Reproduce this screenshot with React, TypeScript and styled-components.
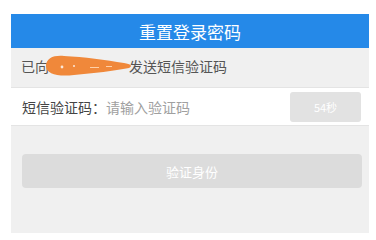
import React from "react";
import styled, { createGlobalStyle } from "styled-components";

const Global = createGlobalStyle`
  html, body { margin: 0; padding: 0; background: #ffffff; }
  body { font-family: "Noto Sans CJK SC", "Noto Sans", sans-serif; }
`;

const Frame = styled.div`
  margin: 14px 0 0 11px;
  width: 358px;
  height: 219px;
  background: #f0f0f0;
  display: flex;
  flex-direction: column;
`;

const Header = styled.div`
  height: 34px;
  background: #2589e8;
  color: #ffffff;
  font-size: 17px;
  display: flex;
  align-items: center;
  justify-content: center;
`;

const Info = styled.div`
  position: relative;
  height: 35px;
  padding: 0 0 4px 10px;
  display: flex;
  align-items: center;
  font-size: 14px;
  color: #555555;
  border-bottom: 1px solid #e4e4e4;
`;

const Masked = styled.span`
  display: inline-block;
  width: 80px;
`;

const Scribble = styled.svg`
  position: absolute;
  left: 33px;
  top: 5px;
`;

const InputRow = styled.div`
  height: 37px;
  background: #ffffff;
  border-bottom: 1px solid #e4e4e4;
  display: flex;
  align-items: center;
  padding: 0 8px 0 11px;
  font-size: 14px;
`;

const Label = styled.span`
  color: #444444;
`;

const Placeholder = styled.span`
  color: #a0a0a0;
  flex: 1;
`;

const CodeButton = styled.div`
  width: 71px;
  height: 30px;
  border-radius: 3px;
  background: #e2e2e2;
  color: #ffffff;
  font-size: 11px;
  display: flex;
  align-items: center;
  justify-content: center;
`;

const Body = styled.div`
  padding: 28px 7px 0 11px;
`;

const Submit = styled.div`
  height: 34px;
  border-radius: 4px;
  background: #dcdcdc;
  color: #ffffff;
  font-size: 13px;
  display: flex;
  align-items: center;
  justify-content: center;
`;

export default function App() {
  return (
    <>
      <Global />
      <Frame>
        <Header>重置登录密码</Header>
        <Info>
          <span>已向</span>
          <Masked />
          <span>发送短信验证码</span>
          <Scribble width="90" height="28" viewBox="0 0 90 28">
            <path
              d="M2 13 C2 5, 10 2, 20 3 C40 4, 62 7, 80 10 C87 11, 89 13, 85 15 C70 18, 50 20, 30 22 C14 24, 2 21, 2 13 Z"
              fill="#f0883a"
            />
            <circle cx="18" cy="14" r="1.4" fill="#ffffff" opacity="0.8" />
            <circle cx="30" cy="13" r="1" fill="#ffffff" opacity="0.8" />
            <rect x="46" y="14" width="9" height="1" fill="#ffd0a8" />
            <rect x="62" y="13" width="6" height="1" fill="#ffd0a8" />
          </Scribble>
        </Info>
        <InputRow>
          <Label>短信验证码：</Label>
          <Placeholder>请输入验证码</Placeholder>
          <CodeButton>54秒</CodeButton>
        </InputRow>
        <Body>
          <Submit>验证身份</Submit>
        </Body>
      </Frame>
    </>
  );
}
